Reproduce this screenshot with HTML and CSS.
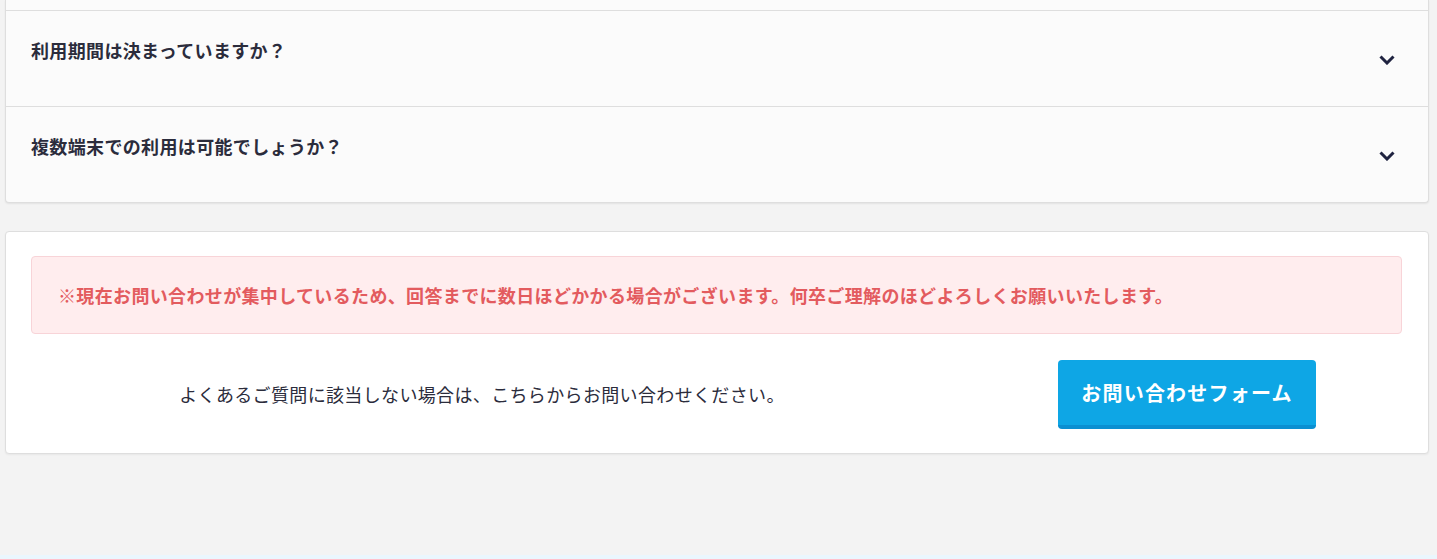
FILE: index.html
```html
<!DOCTYPE html>
<html lang="ja">
<head>
<meta charset="utf-8">
<title>よくあるご質問</title>
<link rel="stylesheet" href="styles.css">
</head>
<body>
<main class="page">
  <section class="faq-card">
    <div class="faq-item">
      <h3 class="faq-q">利用期間は決まっていますか？</h3>
      <svg class="chev" viewBox="0 0 16 10" width="16" height="10"><path d="M1.5 1.5 L8 8 L14.5 1.5" fill="none" stroke="currentColor" stroke-width="3" stroke-linecap="butt" stroke-linejoin="miter"/></svg>
    </div>
    <div class="faq-item">
      <h3 class="faq-q">複数端末での利用は可能でしょうか？</h3>
      <svg class="chev" viewBox="0 0 16 10" width="16" height="10"><path d="M1.5 1.5 L8 8 L14.5 1.5" fill="none" stroke="currentColor" stroke-width="3" stroke-linecap="butt" stroke-linejoin="miter"/></svg>
    </div>
  </section>

  <section class="contact-card">
    <div class="notice">※現在お問い合わせが集中しているため、回答までに数日ほどかかる場合がございます。何卒ご理解のほどよろしくお願いいたします。</div>
    <div class="contact-row">
      <p class="contact-text">よくあるご質問に該当しない場合は、こちらからお問い合わせください。</p>
      <a class="contact-btn" href="#">お問い合わせフォーム</a>
    </div>
  </section>
</main>
<footer class="footer"></footer>
</body>
</html>
```

FILE: styles.css
```css
html, body {
  margin: 0;
  padding: 0;
}
body {
  background: #f3f3f3;
  font-family: "Noto Sans CJK JP", "Noto Sans", sans-serif;
  color: #2b2c3c;
}
.page {
  padding: 0 8px 101px 5px;
}
.faq-card {
  padding-top: 10px;
  background: #fbfbfb;
  border: 1px solid #dedede;
  border-top: none;
  border-radius: 0 0 4px 4px;
  box-shadow: 0 1px 2px rgba(0,0,0,0.07);
}
.faq-item {
  height: 95px;
  display: flex;
  justify-content: space-between;
  padding: 0 33px 0 25px;
  border-top: 1px solid #dedede;
}
.faq-q {
  margin: 0;
  padding-top: 27px;
  font-size: 18px;
  line-height: 24px;
  font-weight: 700;
  color: #2b2c3c;
  letter-spacing: 0.35px;
}
.chev {
  align-self: center;
  margin-top: 3px;
  color: #1f2340;
  display: block;
}
.contact-card {
  margin-top: 28px;
  background: #ffffff;
  border: 1px solid #dedede;
  border-radius: 4px;
  padding: 24px 26px 24px 25px;
  box-shadow: 0 1px 2px rgba(0,0,0,0.05);
}
.notice {
  background: #ffedee;
  border: 1px solid #f8d4d8;
  border-radius: 4px;
  padding: 25px 26px;
  height: 26px;
  font-size: 18px;
  line-height: 26px;
  font-weight: 700;
  color: #e35b5e;
  letter-spacing: 0.35px;
}
.contact-row {
  margin-top: 26px;
  display: flex;
  align-items: center;
}
.contact-text {
  margin: 0;
  width: 894px;
  padding-left: 8px;
  box-sizing: border-box;
  text-align: center;
  font-size: 18px;
  line-height: 27px;
  color: #2b2c3c;
  letter-spacing: 0.35px;
}
.contact-btn {
  margin-left: 133px;
  width: 258px;
  height: 65px;
  box-sizing: content-box;
  display: flex;
  align-items: center;
  justify-content: center;
  background: #0ea6e5;
  border-bottom: 4px solid #0b8fd1;
  border-radius: 4px;
  color: #ffffff;
  font-size: 20px;
  font-weight: 700;
  letter-spacing: 1.2px;
  text-decoration: none;
}
.footer {
  height: 40px;
  background: #eaf6fd;
}
```
